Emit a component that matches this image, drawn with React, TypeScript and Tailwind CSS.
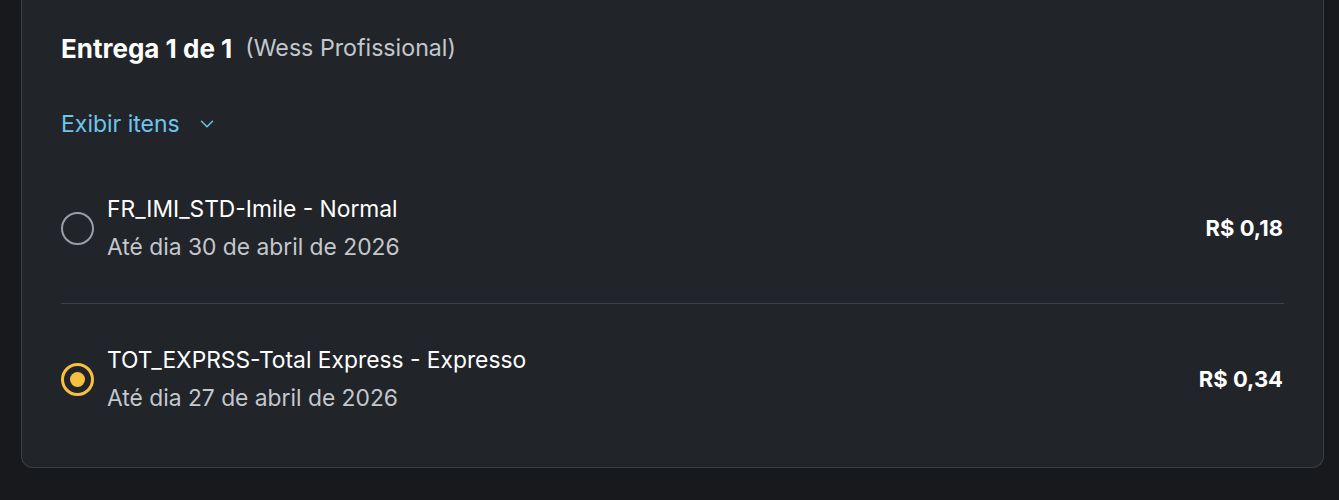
import React from "react";

function Radio({ checked }: { checked?: boolean }) {
  return checked ? (
    <div className="w-[33px] h-[33px] rounded-full border-[3px] border-[#f7c03f] flex items-center justify-center shrink-0">
      <div className="w-[15px] h-[15px] rounded-full bg-[#f7c03f]" />
    </div>
  ) : (
    <div className="w-[33px] h-[33px] rounded-full border-2 border-[#9a9fa6] shrink-0" />
  );
}

function Option({ title, sub, price, checked }: { title: string; sub: string; price: string; checked?: boolean }) {
  return (
    <div className="flex items-center">
      <Radio checked={checked} />
      <div className="ml-[13px] flex flex-col flex-1">
        <span className="text-[22.8px] leading-[30px] text-white">{title}</span>
        <span className="text-[22.8px] leading-[30px] mt-[8px] text-[#c3c8ce]">{sub}</span>
      </div>
      <span className="text-[22px] font-bold text-white mr-[1px]">{price}</span>
    </div>
  );
}

export default function App() {
  return (
    <div
      className="w-[1339px] h-[500px] bg-[#17191c] overflow-hidden"
      style={{ fontFamily: "Inter, 'Noto Sans', sans-serif" }}
    >
      <div className="ml-[21px] w-[1303px] h-[468px] bg-[#212428] border border-t-0 border-[#3b4047] rounded-b-[12px] px-[39px] pt-[31px]">
        <div className="flex items-center h-[34px]">
          <span className="text-[26px] font-bold text-white">Entrega 1 de 1</span>
          <span className="ml-[13px] text-[23.2px] text-[#c3c8ce]">(Wess Profissional)</span>
        </div>
        <div className="mt-[44px] flex items-center h-[30px] text-[#6ec4ee]">
          <span className="text-[23px]">Exibir itens</span>
          <svg className="ml-[16px]" width="22" height="22" viewBox="0 0 24 24" fill="none" stroke="currentColor" strokeWidth="1.6" strokeLinecap="round" strokeLinejoin="round">
            <path d="m6 9 6 6 6-6" />
          </svg>
        </div>
        <div className="mt-[55px]">
          <Option title="FR_IMI_STD-Imile - Normal" sub="Até dia 30 de abril de 2026" price="R$ 0,18" />
        </div>
        <div className="h-px bg-[#3b4047] mt-[41px]" />
        <div className="mt-[41px]">
          <Option title="TOT_EXPRSS-Total Express - Expresso" sub="Até dia 27 de abril de 2026" price="R$ 0,34" checked />
        </div>
      </div>
    </div>
  );
}
